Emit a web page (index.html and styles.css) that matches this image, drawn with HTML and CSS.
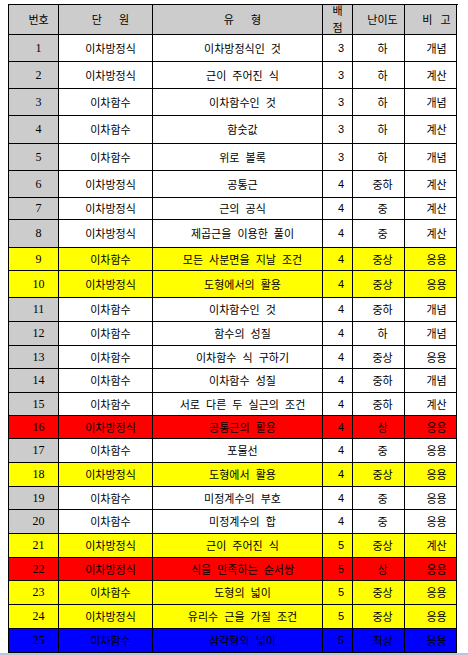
FILE: index.html
```html
<!DOCTYPE html>
<html lang="ko">
<head>
<meta charset="utf-8">
<title>문항 분석표</title>
<link rel="stylesheet" href="styles.css">
</head>
<body>
<div class="sheet">
  <div class="row head h30">
    <div class="c num">번호</div>
    <div class="c unit wide">단 원</div>
    <div class="c type wide">유 형</div>
    <div class="c score stack"><span>배</span><span>점</span></div>
    <div class="c level">난이도</div>
    <div class="c note mid">비 고</div>
  </div>

  <div class="row h27"><div class="c num">1</div><div class="c unit">이차방정식</div><div class="c type">이차방정식인 것</div><div class="c score">3</div><div class="c level">하</div><div class="c note">개념</div></div>
  <div class="row h27"><div class="c num">2</div><div class="c unit">이차방정식</div><div class="c type">근이 주어진 식</div><div class="c score">3</div><div class="c level">하</div><div class="c note">계산</div></div>
  <div class="row h27"><div class="c num">3</div><div class="c unit">이차함수</div><div class="c type">이차함수인 것</div><div class="c score">3</div><div class="c level">하</div><div class="c note">개념</div></div>
  <div class="row h28"><div class="c num">4</div><div class="c unit">이차함수</div><div class="c type">함숫값</div><div class="c score">3</div><div class="c level">하</div><div class="c note">계산</div></div>
  <div class="row h27"><div class="c num">5</div><div class="c unit">이차함수</div><div class="c type">위로 볼록</div><div class="c score">3</div><div class="c level">하</div><div class="c note">개념</div></div>
  <div class="row h27"><div class="c num">6</div><div class="c unit">이차방정식</div><div class="c type">공통근</div><div class="c score">4</div><div class="c level">중하</div><div class="c note">계산</div></div>
  <div class="row h22"><div class="c num">7</div><div class="c unit">이차방정식</div><div class="c type">근의 공식</div><div class="c score">4</div><div class="c level">중</div><div class="c note">계산</div></div>
  <div class="row h28"><div class="c num">8</div><div class="c unit">이차방정식</div><div class="c type">제곱근을 이용한 풀이</div><div class="c score">4</div><div class="c level">중</div><div class="c note">계산</div></div>
  <div class="row h23 yellow"><div class="c num">9</div><div class="c unit">이차함수</div><div class="c type">모든 사분면을 지날 조건</div><div class="c score">4</div><div class="c level">중상</div><div class="c note">응용</div></div>
  <div class="row h27 yellow"><div class="c num">10</div><div class="c unit">이차방정식</div><div class="c type">도형에서의 활용</div><div class="c score">4</div><div class="c level">중상</div><div class="c note">응용</div></div>
  <div class="row h24"><div class="c num">11</div><div class="c unit">이차함수</div><div class="c type">이차함수인 것</div><div class="c score">4</div><div class="c level">중하</div><div class="c note">개념</div></div>
  <div class="row h24"><div class="c num">12</div><div class="c unit">이차함수</div><div class="c type">함수의 성질</div><div class="c score">4</div><div class="c level">하</div><div class="c note">개념</div></div>
  <div class="row h23"><div class="c num">13</div><div class="c unit">이차함수</div><div class="c type">이차함수 식 구하기</div><div class="c score">4</div><div class="c level">중상</div><div class="c note">응용</div></div>
  <div class="row h24"><div class="c num">14</div><div class="c unit">이차함수</div><div class="c type">이차함수 성질</div><div class="c score">4</div><div class="c level">중하</div><div class="c note">개념</div></div>
  <div class="row h23"><div class="c num">15</div><div class="c unit">이차함수</div><div class="c type">서로 다른 두 실근의 조건</div><div class="c score">4</div><div class="c level">중하</div><div class="c note">계산</div></div>
  <div class="row h23 red"><div class="c num">16</div><div class="c unit">이차방정식</div><div class="c type">공통근의 활용</div><div class="c score">4</div><div class="c level">상</div><div class="c note">응용</div></div>
  <div class="row h24"><div class="c num">17</div><div class="c unit">이차함수</div><div class="c type">포물선</div><div class="c score">4</div><div class="c level">중</div><div class="c note">응용</div></div>
  <div class="row h24 yellow"><div class="c num">18</div><div class="c unit">이차방정식</div><div class="c type">도형에서 활용</div><div class="c score">4</div><div class="c level">중상</div><div class="c note">응용</div></div>
  <div class="row h23"><div class="c num">19</div><div class="c unit">이차함수</div><div class="c type">미정계수의 부호</div><div class="c score">4</div><div class="c level">중</div><div class="c note">응용</div></div>
  <div class="row h24"><div class="c num">20</div><div class="c unit">이차함수</div><div class="c type">미정계수의 합</div><div class="c score">4</div><div class="c level">중</div><div class="c note">응용</div></div>
  <div class="row h24 yellow"><div class="c num">21</div><div class="c unit">이차방정식</div><div class="c type">근이 주어진 식</div><div class="c score">5</div><div class="c level">중상</div><div class="c note">계산</div></div>
  <div class="row h23 red"><div class="c num">22</div><div class="c unit">이차방정식</div><div class="c type">식을 만족하는 순서쌍</div><div class="c score">5</div><div class="c level">상</div><div class="c note">응용</div></div>
  <div class="row h24 yellow"><div class="c num">23</div><div class="c unit">이차함수</div><div class="c type">도형의 넓이</div><div class="c score">5</div><div class="c level">중상</div><div class="c note">응용</div></div>
  <div class="row h24 yellow"><div class="c num">24</div><div class="c unit">이차방정식</div><div class="c type">유리수 근을 가질 조건</div><div class="c score">5</div><div class="c level">중상</div><div class="c note">응용</div></div>
  <div class="row h24 blue"><div class="c num">25</div><div class="c unit">이차함수</div><div class="c type">삼각형의 넓이</div><div class="c score">5</div><div class="c level">최상</div><div class="c note">응용</div></div>
</div>
<div class="frame"></div>
</body>
</html>
```

FILE: styles.css
```css
html, body {
  margin: 0;
  padding: 0;
  background: #ffffff;
  overflow: hidden;
}

body {
  padding-top: 4px;
  font-family: "Noto Sans CJK KR", "Liberation Sans", sans-serif;
  font-size: 11px;
  color: #000000;
}

.sheet {
  margin-left: 8px;
  width: 449px;
  border-left: 1px solid #000;
  border-top: 1px solid #000;
  display: grid;
  grid-template-columns: 50px 94px 170px 30px 52px 52px;
}

.row {
  display: contents;
}

.c {
  box-sizing: border-box;
  border-right: 1px solid #000;
  border-bottom: 1px solid #000;
  background: #ffffff;
  display: flex;
  align-items: center;
  justify-content: center;
  padding-left: 10px;
  line-height: 13px;
  white-space: pre;
  word-spacing: 3px;
}

.h22 > .c { height: 22px; }
.h23 > .c { height: 23px; }
.h24 > .c { height: 24px; }
.h27 > .c { height: 27px; }
.h28 > .c { height: 28px; }
.h30 > .c { height: 30px; }

.num {
  background: #cccccc;
  font-family: "Liberation Serif", "Noto Sans CJK KR", serif;
  font-size: 12px;
}

.score {
  justify-content: flex-end;
  padding-left: 0;
  padding-right: 8px;
  font-family: "Liberation Sans", sans-serif;
  font-size: 11px;
}

.level { padding-left: 8px; }
.note { padding-left: 12px; }

.head > .c {
  background: #cccccc;
  font-family: "Noto Sans CJK KR", sans-serif;
  font-size: 11px;
}

.head > .wide { word-spacing: 14px; }
.head > .mid { word-spacing: 5px; }

.head > .stack {
  flex-direction: column;
  align-items: center;
  justify-content: space-between;
  padding: 0 0 1px 0;
  line-height: 11px;
  white-space: normal;
}

.head > .stack span {
  display: block;
  height: 11px;
}

.yellow > .c { background: #ffff00; }
.red > .c { background: #ff0000; }
.blue > .c { background: #0000ff; }

.frame {
  height: 2px;
  background: #b8c8da;
}
```
